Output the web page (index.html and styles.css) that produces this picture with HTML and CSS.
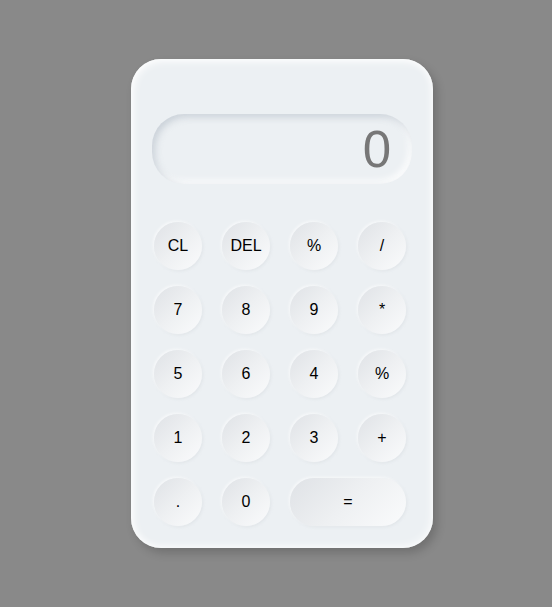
FILE: index.html
```html
<!DOCTYPE html>
<html>
<head>
<meta charset="utf-8">
<link rel="stylesheet" href="styles.css">
</head>
<body>
<div class="calc">
  <div class="display">0</div>
  <div class="keys">
    <button class="key">CL</button>
    <button class="key">DEL</button>
    <button class="key">%</button>
    <button class="key">/</button>
    <button class="key">7</button>
    <button class="key">8</button>
    <button class="key">9</button>
    <button class="key">*</button>
    <button class="key">5</button>
    <button class="key">6</button>
    <button class="key">4</button>
    <button class="key">%</button>
    <button class="key">1</button>
    <button class="key">2</button>
    <button class="key">3</button>
    <button class="key">+</button>
    <button class="key">.</button>
    <button class="key">0</button>
    <button class="key wide">=</button>
  </div>
</div>
</body>
</html>
```

FILE: styles.css
```css
html, body {
  margin: 0;
  padding: 0;
}
body {
  background: #898989;
  min-height: 607px;
  display: flex;
  align-items: center;
  font-family: "Liberation Sans", Arial, sans-serif;
}
.calc {
  margin-left: 131px;
  width: 302px;
  height: 489px;
  box-sizing: border-box;
  padding: 55px 21px 22px 21px;
  background: #ecf0f3;
  border-radius: 30px;
  box-shadow: 4px 5px 10px rgba(0, 0, 0, 0.18), inset 2px 2px 8px rgba(255, 255, 255, 0.95), inset -2px -2px 8px rgba(255, 255, 255, 0.6);
  display: flex;
  flex-direction: column;
}
.display {
  height: 70px;
  border-radius: 32px;
  background: #ecf0f3;
  box-shadow: inset 3px 3px 7px rgba(160, 170, 185, 0.45), inset -3px -3px 7px rgba(255, 255, 255, 0.95);
  display: flex;
  align-items: center;
  justify-content: flex-end;
  padding-right: 21px;
  font-size: 51px;
  color: #777;
  line-height: 1;
}
.keys {
  margin-top: 38px;
  margin-left: 2px;
  display: grid;
  grid-template-columns: repeat(4, 48px);
  grid-auto-rows: 48px;
  column-gap: 20px;
  row-gap: 16px;
}
.key {
  border: none;
  margin: 0;
  padding: 0 0 1px 0;
  width: 48px;
  height: 48px;
  border-radius: 24px;
  background: linear-gradient(135deg, #dfe2e6 0%, #eef0f2 50%, #fafbfc 100%);
  box-shadow: -1px -1px 3px rgba(255, 255, 255, 0.7), 1px 1px 3px rgba(200, 205, 212, 0.35);
  font-family: "Liberation Sans", Arial, sans-serif;
  font-size: 16px;
  color: #000;
  display: flex;
  align-items: center;
  justify-content: center;
}
.key.wide {
  grid-column: span 2;
  width: 116px;
}
```
